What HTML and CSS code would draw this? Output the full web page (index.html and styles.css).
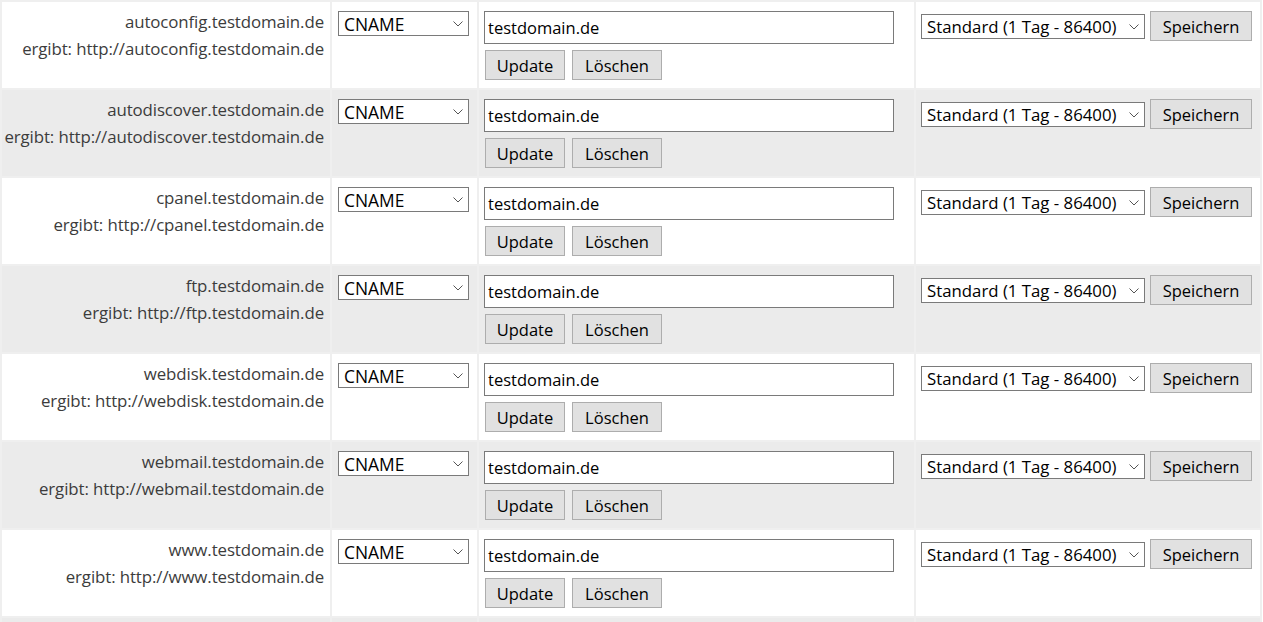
FILE: index.html
```html
<!DOCTYPE html>
<html lang="de">
<head>
<meta charset="utf-8">
<title>DNS</title>
<link rel="stylesheet" href="styles.css">
</head>
<body>
<table class="dns">
  <colgroup>
    <col class="c-name"><col class="c-type"><col class="c-target"><col class="c-ttl">
  </colgroup>
  <tbody>
    <tr class="row">
      <td class="name"><div>autoconfig.testdomain.de</div><div>ergibt: http://autoconfig.testdomain.de</div></td>
      <td class="type"><span class="sel sel-type"><span class="sel-text">CNAME</span><svg class="chev" width="10" height="6" viewBox="0 0 10 6"><path d="M0.5 0.5 L5 5 L9.5 0.5" fill="none" stroke="#555" stroke-width="1"/></svg></span></td>
      <td class="target"><div class="inp">testdomain.de</div><div class="btns"><span class="btn">Update</span><span class="btn">Löschen</span></div></td>
      <td class="ttl"><span class="sel sel-ttl"><span class="sel-text">Standard (1 Tag - 86400)</span><svg class="chev" width="10" height="6" viewBox="0 0 10 6"><path d="M0.5 0.5 L5 5 L9.5 0.5" fill="none" stroke="#555" stroke-width="1"/></svg></span><span class="btn btn-save">Speichern</span></td>
    </tr>
    <tr class="row alt">
      <td class="name"><div>autodiscover.testdomain.de</div><div>ergibt: http://autodiscover.testdomain.de</div></td>
      <td class="type"><span class="sel sel-type"><span class="sel-text">CNAME</span><svg class="chev" width="10" height="6" viewBox="0 0 10 6"><path d="M0.5 0.5 L5 5 L9.5 0.5" fill="none" stroke="#555" stroke-width="1"/></svg></span></td>
      <td class="target"><div class="inp">testdomain.de</div><div class="btns"><span class="btn">Update</span><span class="btn">Löschen</span></div></td>
      <td class="ttl"><span class="sel sel-ttl"><span class="sel-text">Standard (1 Tag - 86400)</span><svg class="chev" width="10" height="6" viewBox="0 0 10 6"><path d="M0.5 0.5 L5 5 L9.5 0.5" fill="none" stroke="#555" stroke-width="1"/></svg></span><span class="btn btn-save">Speichern</span></td>
    </tr>
    <tr class="row">
      <td class="name"><div>cpanel.testdomain.de</div><div>ergibt: http://cpanel.testdomain.de</div></td>
      <td class="type"><span class="sel sel-type"><span class="sel-text">CNAME</span><svg class="chev" width="10" height="6" viewBox="0 0 10 6"><path d="M0.5 0.5 L5 5 L9.5 0.5" fill="none" stroke="#555" stroke-width="1"/></svg></span></td>
      <td class="target"><div class="inp">testdomain.de</div><div class="btns"><span class="btn">Update</span><span class="btn">Löschen</span></div></td>
      <td class="ttl"><span class="sel sel-ttl"><span class="sel-text">Standard (1 Tag - 86400)</span><svg class="chev" width="10" height="6" viewBox="0 0 10 6"><path d="M0.5 0.5 L5 5 L9.5 0.5" fill="none" stroke="#555" stroke-width="1"/></svg></span><span class="btn btn-save">Speichern</span></td>
    </tr>
    <tr class="row alt">
      <td class="name"><div>ftp.testdomain.de</div><div>ergibt: http://ftp.testdomain.de</div></td>
      <td class="type"><span class="sel sel-type"><span class="sel-text">CNAME</span><svg class="chev" width="10" height="6" viewBox="0 0 10 6"><path d="M0.5 0.5 L5 5 L9.5 0.5" fill="none" stroke="#555" stroke-width="1"/></svg></span></td>
      <td class="target"><div class="inp">testdomain.de</div><div class="btns"><span class="btn">Update</span><span class="btn">Löschen</span></div></td>
      <td class="ttl"><span class="sel sel-ttl"><span class="sel-text">Standard (1 Tag - 86400)</span><svg class="chev" width="10" height="6" viewBox="0 0 10 6"><path d="M0.5 0.5 L5 5 L9.5 0.5" fill="none" stroke="#555" stroke-width="1"/></svg></span><span class="btn btn-save">Speichern</span></td>
    </tr>
    <tr class="row">
      <td class="name"><div>webdisk.testdomain.de</div><div>ergibt: http://webdisk.testdomain.de</div></td>
      <td class="type"><span class="sel sel-type"><span class="sel-text">CNAME</span><svg class="chev" width="10" height="6" viewBox="0 0 10 6"><path d="M0.5 0.5 L5 5 L9.5 0.5" fill="none" stroke="#555" stroke-width="1"/></svg></span></td>
      <td class="target"><div class="inp">testdomain.de</div><div class="btns"><span class="btn">Update</span><span class="btn">Löschen</span></div></td>
      <td class="ttl"><span class="sel sel-ttl"><span class="sel-text">Standard (1 Tag - 86400)</span><svg class="chev" width="10" height="6" viewBox="0 0 10 6"><path d="M0.5 0.5 L5 5 L9.5 0.5" fill="none" stroke="#555" stroke-width="1"/></svg></span><span class="btn btn-save">Speichern</span></td>
    </tr>
    <tr class="row alt">
      <td class="name"><div>webmail.testdomain.de</div><div>ergibt: http://webmail.testdomain.de</div></td>
      <td class="type"><span class="sel sel-type"><span class="sel-text">CNAME</span><svg class="chev" width="10" height="6" viewBox="0 0 10 6"><path d="M0.5 0.5 L5 5 L9.5 0.5" fill="none" stroke="#555" stroke-width="1"/></svg></span></td>
      <td class="target"><div class="inp">testdomain.de</div><div class="btns"><span class="btn">Update</span><span class="btn">Löschen</span></div></td>
      <td class="ttl"><span class="sel sel-ttl"><span class="sel-text">Standard (1 Tag - 86400)</span><svg class="chev" width="10" height="6" viewBox="0 0 10 6"><path d="M0.5 0.5 L5 5 L9.5 0.5" fill="none" stroke="#555" stroke-width="1"/></svg></span><span class="btn btn-save">Speichern</span></td>
    </tr>
    <tr class="row">
      <td class="name"><div>www.testdomain.de</div><div>ergibt: http://www.testdomain.de</div></td>
      <td class="type"><span class="sel sel-type"><span class="sel-text">CNAME</span><svg class="chev" width="10" height="6" viewBox="0 0 10 6"><path d="M0.5 0.5 L5 5 L9.5 0.5" fill="none" stroke="#555" stroke-width="1"/></svg></span></td>
      <td class="target"><div class="inp">testdomain.de</div><div class="btns"><span class="btn">Update</span><span class="btn">Löschen</span></div></td>
      <td class="ttl"><span class="sel sel-ttl"><span class="sel-text">Standard (1 Tag - 86400)</span><svg class="chev" width="10" height="6" viewBox="0 0 10 6"><path d="M0.5 0.5 L5 5 L9.5 0.5" fill="none" stroke="#555" stroke-width="1"/></svg></span><span class="btn btn-save">Speichern</span></td>
    </tr>
    <tr class="row alt">
      <td class="name tail"></td><td class="tail"></td><td class="tail"></td><td class="tail"></td>
    </tr>
  </tbody>
</table>
</body>
</html>
```

FILE: styles.css
```css
html, body {
  margin: 0;
  padding: 0;
  background: #ffffff;
}
body {
  font-family: "Open Sans", "Noto Sans", sans-serif;
  color: #000;
  overflow: hidden;
}
.dns {
  border-collapse: separate;
  border-spacing: 2px;
  background: #efefef;
  table-layout: fixed;
  width: 1262px;
}
.c-name { width: 328px; }
.c-type { width: 145px; }
.c-target { width: 435px; }
.c-ttl { width: 344px; }

.dns td {
  padding: 0;
  vertical-align: top;
  height: 86px;
  box-sizing: border-box;
  background: #ffffff;
}
.dns .alt td { background: #ebebeb; }

.name {
  text-align: right;
  padding: 6px 6px 0 0 !important;
  font-size: 16.85px;
  line-height: 27px;
  color: #3c3c3c;
  white-space: nowrap;
  letter-spacing: -0.1px;
}

.type { padding: 9px 0 0 6px !important; }
.target { padding: 9px 0 0 5px !important; }
.ttl { padding: 9px 0 0 5px !important; }

.sel {
  position: relative;
  display: inline-flex;
  align-items: center;
  box-sizing: border-box;
  border: 1px solid #7a7a7a;
  background: #ffffff;
  font-family: "Open Sans", sans-serif;
  color: #000;
  vertical-align: top;
}
.sel-type {
  width: 131px;
  height: 25px;
  font-size: 17.4px;
  padding-left: 5px;
}
.sel-ttl {
  width: 224px;
  height: 25px;
  font-size: 16.8px;
  padding-left: 5px;
  margin-top: 3px;
}
.sel-text { line-height: 22px; white-space: nowrap; }
.chev {
  position: absolute;
  right: 5px;
  top: 9px;
}

.inp {
  box-sizing: border-box;
  width: 410px;
  height: 33px;
  border: 1px solid #7a7a7a;
  background: #fff;
  font-size: 16.5px;
  line-height: 31px;
  padding-left: 3px;
  color: #000;
}
.btns {
  display: flex;
  gap: 7px;
  margin-top: 6px;
  padding-left: 1px;
}
.btn {
  display: inline-flex;
  align-items: center;
  justify-content: center;
  box-sizing: border-box;
  height: 30px;
  border: 1px solid #adadad;
  background: #e1e1e1;
  font-size: 16.5px;
  color: #000;
  padding: 0 12px;
  white-space: nowrap;
}
.btns .btn:first-child { width: 80px; padding: 0; }
.btns .btn:last-child { width: 90px; padding: 0; }
.btn-save {
  width: 102px;
  padding: 0;
  margin-left: 5px;
  vertical-align: top;
}
.dns .tail { height: 20px; }
```
